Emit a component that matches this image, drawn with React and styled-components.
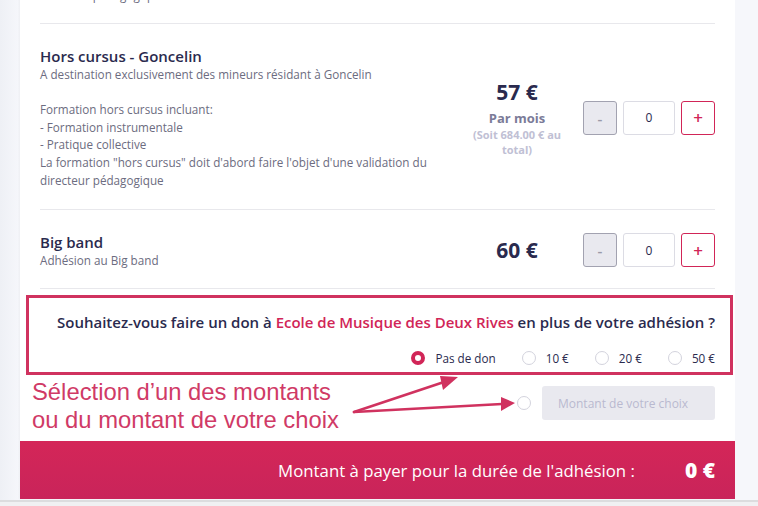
import React from 'react'
import styled, {createGlobalStyle} from 'styled-components'

const GlobalStyle = createGlobalStyle`
  html, body {
    margin: 0;
    padding: 0;
    background: #f5f6fa;
    font-family: "Open Sans", "Noto Sans", sans-serif;
    overflow: hidden;
  }
`;

const crimson = '#d12557';
const navy = '#2a2a4e';

const StyledPage = styled.div `
  position: relative;
  width: 758px;
  height: 506px;
  overflow: hidden;
  padding-left: 20px;
  box-sizing: border-box;
  background: linear-gradient(90deg, #eef0f5 0, #f6f7fb 20px);
`;

const StyledCard = styled.div `
  width: 715px;
  background: white;
  box-shadow: -1px 0 2px rgba(0,0,0,0.04);
`;

const StyledInner = styled.div `
  padding: 0 20px;
`;

const StyledTail = styled.div `
  margin-top: -13px;
  padding-bottom: 18px;
  border-bottom: 1px solid #e8e8ec;
  font-size: 11.7px;
  line-height: 17.6px;
  color: #6c6c80;
`;

const StyledItem = styled.div `
  display: flex;
  align-items: center;
  padding: 22px 0 19px;
  border-bottom: 1px solid #e8e8ec;
`;

const StyledInfo = styled.div `
  flex: 1;
`;

const StyledTitle = styled.div `
  font-size: 15px;
  font-weight: 600;
  line-height: 20px;
  color: ${navy};
`;

const StyledDesc = styled.div `
  font-size: 11.7px;
  line-height: 17.7px;
  color: #6c6c80;
  white-space: pre-line;
`;

const StyledPrice = styled.div `
  width: 112px;
  margin-right: 10px;
  text-align: center;
`;

const StyledAmount = styled.div `
  font-size: 21px;
  font-weight: 700;
  line-height: 26px;
  color: ${navy};
`;

const StyledPeriod = styled.div `
  margin-top: 4px;
  font-size: 13px;
  font-weight: 700;
  line-height: 18px;
  color: #7b7b98;
`;

const StyledTotal = styled.div `
  font-size: 11px;
  font-weight: 700;
  line-height: 15px;
  color: #c0c0d4;
`;

const StyledControls = styled.div `
  display: flex;
  gap: 6px;
`;

const StyledStep = styled.div `
  width: 34px;
  height: 34px;
  box-sizing: border-box;
  border-radius: 3px;
  display: flex;
  align-items: center;
  justify-content: center;
  font-size: ${props => props.plus ? '17px' : '15px'};
  font-weight: 600;
  border: 1px solid ${props => props.plus ? crimson : '#a2a2b0'};
  background: ${props => props.plus ? 'white' : '#e9e9ef'};
  color: ${props => props.plus ? crimson : '#9a9aa8'};
`;

const StyledQty = styled.div `
  width: 52px;
  height: 34px;
  box-sizing: border-box;
  border: 1px solid #dcdce4;
  border-radius: 3px;
  display: flex;
  align-items: center;
  justify-content: center;
  font-size: 12px;
  color: ${navy};
`;

const StyledDonation = styled.div `
  margin: 6px -18px 0 -14px;
  padding: 14px 15px 4px;
  border: 3px solid #d0325f;
  text-align: right;
`;

const StyledQuestion = styled.div `
  font-size: 15px;
  font-weight: 600;
  line-height: 20px;
  color: ${navy};

  span {
    color: ${crimson};
  }
`;

const StyledOptions = styled.div `
  margin-top: 16px;
  display: flex;
  justify-content: flex-end;
  gap: 26px;
`;

const StyledOption = styled.label `
  display: flex;
  align-items: center;
  gap: 10px;
  font-size: 11.7px;
  line-height: 20px;
  color: ${navy};
`;

const StyledRadio = styled.span `
  width: 14px;
  height: 14px;
  box-sizing: border-box;
  border-radius: 50%;
  background: white;
  border: ${props => props.checked ? `4px solid ${crimson}` : '1px solid #d3d3dd'};
`;

const StyledCustom = styled.div `
  margin: 11px 0 21px;
  display: flex;
  justify-content: flex-end;
  align-items: center;
  gap: 11px;
`;

const StyledCustomInput = styled.div `
  width: 173px;
  height: 34px;
  box-sizing: border-box;
  padding-left: 16px;
  border-radius: 3px;
  background: #e9e9ef;
  display: flex;
  align-items: center;
  font-size: 12px;
  color: #b9b9d0;
`;

const StyledFooter = styled.div `
  height: 58px;
  padding-right: 20px;
  display: flex;
  justify-content: flex-end;
  align-items: center;
  gap: 50px;
  background: linear-gradient(#d42658, #c9245a);
  color: white;
`;

const StyledFooterLabel = styled.div `
  font-size: 16.8px;
  font-weight: 500;
`;

const StyledFooterTotal = styled.div `
  font-size: 21px;
  font-weight: 800;
`;

const StyledBottom = styled.div `
  position: absolute;
  left: 0;
  right: 0;
  top: 500px;
  height: 6px;
  background: #f0f0f2;
  border-top: 2px solid #dcdcde;
`;

const StyledNote = styled.div `
  position: absolute;
  left: 32px;
  top: 378px;
  font-family: "Liberation Sans", Arial, sans-serif;
  font-size: 23.8px;
  line-height: 28px;
  color: #d03a66;
`;

const StyledArrows = styled.svg `
  position: absolute;
  left: 0;
  top: 0;
`;

const items = [
  {
    title: 'Hors cursus - Goncelin',
    desc: 'A destination exclusivement des mineurs résidant à Goncelin\n\nFormation hors cursus incluant:\n- Formation instrumentale\n- Pratique collective\nLa formation "hors cursus" doit d\'abord faire l\'objet d\'une validation du directeur pédagogique',
    amount: '57 €',
    period: 'Par mois',
    total: '(Soit 684.00 € au total)'
  },
  {
    title: 'Big band',
    desc: 'Adhésion au Big band',
    amount: '60 €'
  }
];

const Item = (props) => {
  return (
    <StyledItem>
      <StyledInfo>
        <StyledTitle>{props.title}</StyledTitle>
        <StyledDesc>{props.desc}</StyledDesc>
      </StyledInfo>
      <StyledPrice>
        <StyledAmount>{props.amount}</StyledAmount>
        {props.period && <StyledPeriod>{props.period}</StyledPeriod>}
        {props.total && <StyledTotal>{props.total}</StyledTotal>}
      </StyledPrice>
      <StyledControls>
        <StyledStep>-</StyledStep>
        <StyledQty>0</StyledQty>
        <StyledStep plus>+</StyledStep>
      </StyledControls>
    </StyledItem>
  );
}

const options = ['Pas de don', '10 €', '20 €', '50 €'];

export default function App() {
  return (
    <StyledPage>
      <GlobalStyle/>
      <StyledCard>
        <StyledInner>
          <StyledTail>directeur pédagogique</StyledTail>
          {items.map((item, i) => <Item key={i} {...item}/>)}
          <StyledDonation>
            <StyledQuestion>
              Souhaitez-vous faire un don à <span>Ecole de Musique des Deux Rives</span> en plus de votre adhésion ?
            </StyledQuestion>
            <StyledOptions>
              {options.map((o, i) => (
                <StyledOption key={o}>
                  <StyledRadio checked={i === 0}/>
                  {o}
                </StyledOption>
              ))}
            </StyledOptions>
          </StyledDonation>
          <StyledCustom>
            <StyledRadio/>
            <StyledCustomInput>Montant de votre choix</StyledCustomInput>
          </StyledCustom>
        </StyledInner>
        <StyledFooter>
          <StyledFooterLabel>Montant à payer pour la durée de l'adhésion :</StyledFooterLabel>
          <StyledFooterTotal>0 €</StyledFooterTotal>
        </StyledFooter>
      </StyledCard>
      <StyledBottom/>
      <StyledNote>
        Sélection d’un des montants<br/>ou du montant de votre choix
      </StyledNote>
      <StyledArrows width="758" height="506">
        <g stroke="#d0325f" strokeWidth="2.6" fill="none" strokeLinecap="round">
          <line x1="354" y1="412" x2="447" y2="381"/>
          <line x1="354" y1="412" x2="502" y2="404"/>
        </g>
        <g fill="#d0325f">
          <polygon points="458,377 443,390 440,376"/>
          <polygon points="515,403 501,397 501,411"/>
        </g>
      </StyledArrows>
    </StyledPage>
  );
}
